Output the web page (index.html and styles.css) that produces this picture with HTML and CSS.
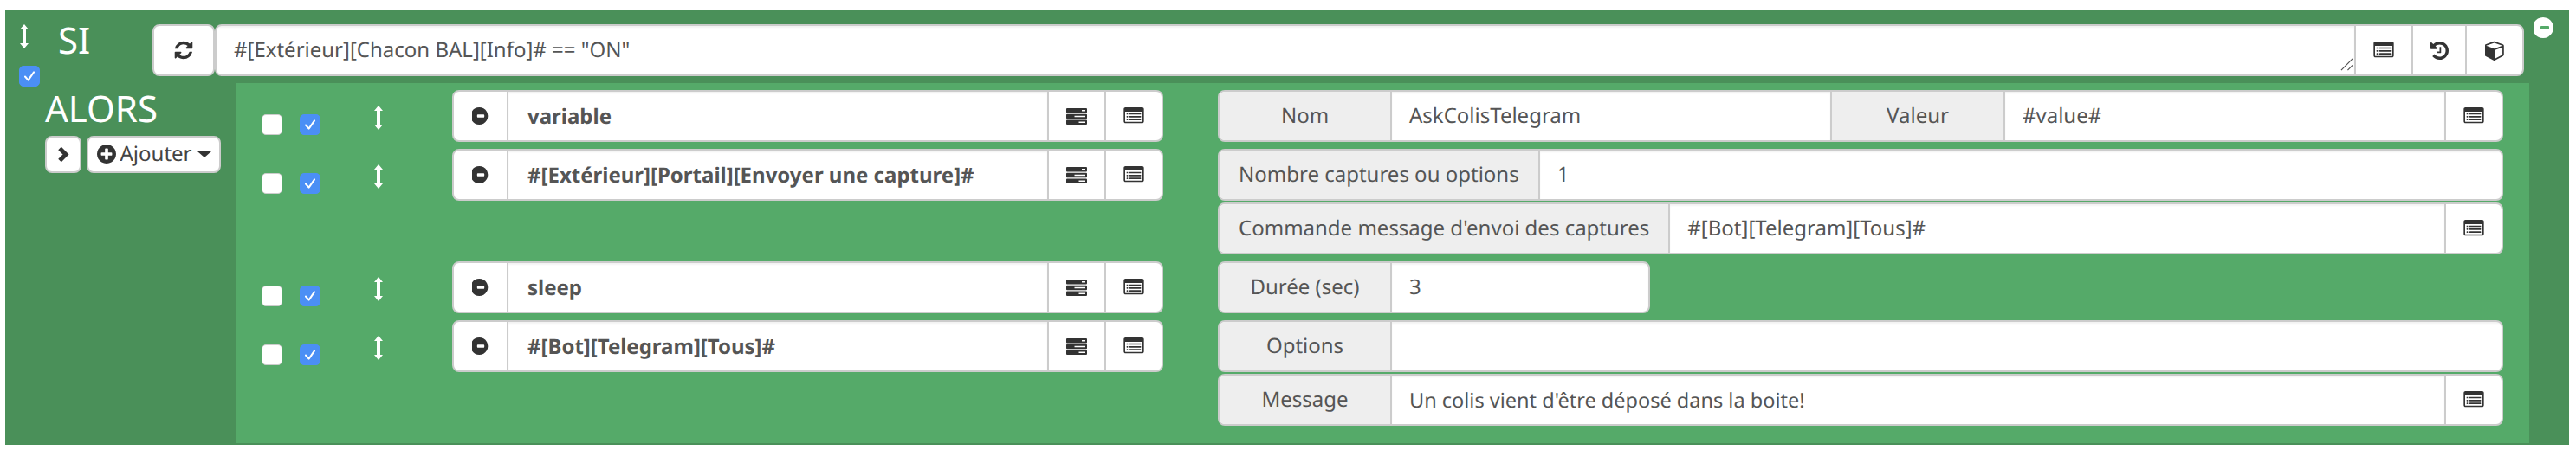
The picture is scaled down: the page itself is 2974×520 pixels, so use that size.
FILE: index.html
```html
<!DOCTYPE html>
<html lang="fr">
<head>
    <meta charset="UTF-8">
    <title>Scénario</title>
    <link rel="stylesheet" href="styles.css">
</head>
<body>

<svg class="sprites" xmlns="http://www.w3.org/2000/svg">
    <symbol id="i-refresh" viewBox="0 0 1792 1792"><path d="M1639 1056q0 5-1 7-64 268-268 434.5t-478 166.5q-146 0-282.5-55t-243.5-157l-129 129q-19 19-45 19t-45-19-19-45v-448q0-26 19-45t45-19h448q26 0 45 19t19 45-19 45l-137 137q71 66 161 102t187 36q134 0 250-65t186-179q11-17 53-117 8-23 30-23h192q13 0 22.5 9.5t9.5 22.5zm25-800v448q0 26-19 45t-45 19h-448q-26 0-45-19t-19-45 19-45l138-138q-148-137-349-137-134 0-250 65t-186 179q-11 17-53 117-8 23-30 23h-199q-13 0-22.5-9.5t-9.5-22.5v-7q65-268 270-434.5t480-166.5q146 0 284 55.5t245 156.5l130-129q19-19 45-19t45 19 19 45z"/></symbol>
    <symbol id="i-minus" viewBox="128 128 1536 1536"><path d="M1216 960v-128q0-26-19-45t-45-19h-512q-26 0-45 19t-19 45v128q0 26 19 45t45 19h512q26 0 45-19t19-45zm320-64q0 209-103 385.5t-279.5 279.5-385.5 103-385.5-103-279.5-279.5-103-385.5 103-385.5 279.5-279.5 385.5-103 385.5 103 279.5 279.5 103 385.5z"/></symbol>
    <symbol id="i-plus" viewBox="128 128 1536 1536"><path d="M1344 960v-128q0-26-19-45t-45-19h-256v-256q0-26-19-45t-45-19h-128q-26 0-45 19t-19 45v256h-256q-26 0-45 19t-19 45v128q0 26 19 45t45 19h256v256q0 26 19 45t45 19h128q26 0 45-19t19-45v-256h256q26 0 45-19t19-45zm320-64q0 209-103 385.5t-279.5 279.5-385.5 103-385.5-103-279.5-279.5-103-385.5 103-385.5 279.5-279.5 385.5-103 385.5 103 279.5 279.5 103 385.5z"/></symbol>
    <symbol id="i-list" viewBox="0 128 1792 1536"><path d="M384 1184v64q0 13-9.5 22.5t-22.5 9.5h-64q-13 0-22.5-9.5t-9.5-22.5v-64q0-13 9.5-22.5t22.5-9.5h64q13 0 22.5 9.5t9.5 22.5zm0-256v64q0 13-9.5 22.5t-22.5 9.5h-64q-13 0-22.5-9.5t-9.5-22.5v-64q0-13 9.5-22.5t22.5-9.5h64q13 0 22.5 9.5t9.5 22.5zm0-256v64q0 13-9.5 22.5t-22.5 9.5h-64q-13 0-22.5-9.5t-9.5-22.5v-64q0-13 9.5-22.5t22.5-9.5h64q13 0 22.5 9.5t9.5 22.5zm1152 512v64q0 13-9.5 22.5t-22.5 9.5h-960q-13 0-22.5-9.5t-9.5-22.5v-64q0-13 9.5-22.5t22.5-9.5h960q13 0 22.5 9.5t9.5 22.5zm0-256v64q0 13-9.5 22.5t-22.5 9.5h-960q-13 0-22.5-9.5t-9.5-22.5v-64q0-13 9.5-22.5t22.5-9.5h960q13 0 22.5 9.5t9.5 22.5zm0-256v64q0 13-9.5 22.5t-22.5 9.5h-960q-13 0-22.5-9.5t-9.5-22.5v-64q0-13 9.5-22.5t22.5-9.5h960q13 0 22.5 9.5t9.5 22.5zm128 704v-832q0-13-9.5-22.5t-22.5-9.5h-1472q-13 0-22.5 9.5t-9.5 22.5v832q0 13 9.5 22.5t22.5 9.5h1472q13 0 22.5-9.5t9.5-22.5zm128-1088v1088q0 66-47 113t-113 47h-1472q-66 0-113-47t-47-113v-1088q0-66 47-113t113-47h1472q66 0 113 47t47 113z"/></symbol>
    <symbol id="i-history" viewBox="128 128 1536 1536"><path d="M1664 896q0 156-61 298t-164 245-245 164-298 61q-172 0-327-72.5t-264-204.5q-7-10-6.5-22.5t8.5-20.5l137-138q10-9 25-9 16 2 23 12 73 95 179 147t225 52q104 0 198.5-40.5t163.5-109.5 109.5-163.5 40.5-198.5-40.5-198.5-109.5-163.5-163.5-109.5-198.5-40.5q-98 0-188 35.5t-160 101.5l137 138q31 30 14 69-17 40-59 40h-448q-26 0-45-19t-19-45v-448q0-42 40-59 39-17 69 14l130 129q107-101 244.5-156.5t284.5-55.5q156 0 298 61t245 164 164 245 61 298zm-640-288v448q0 14-9 23t-23 9h-320q-14 0-23-9t-9-23v-64q0-14 9-23t23-9h224v-352q0-14 9-23t23-9h64q14 0 23 9t9 23z"/></symbol>
    <symbol id="i-cube" viewBox="128 0 1536 1792"><path d="M896 1629l640-349v-636l-640 233v752zm-64-865l698-254-698-254-698 254zm832-252v768q0 35-18 65t-49 47l-704 384q-28 16-61 16t-61-16l-704-384q-31-17-49-47t-18-65v-768q0-40 23-73t61-47l704-256q22-8 44-8t44 8l704 256q38 14 61 47t23 73z"/></symbol>
    <symbol id="i-server" viewBox="0 0 24 19">
        <path d="M1 0h22a1 1 0 0 1 1 1v3.500a1 1 0 0 1-1 1H1a1 1 0 0 1-1-1V1a1 1 0 0 1 1-1zm17 2v1.500h4V2zM1 6.750h22a1 1 0 0 1 1 1v3.500a1 1 0 0 1-1 1H1a1 1 0 0 1-1-1v-3.500a1 1 0 0 1 1-1zm8.500 2v1.500H22v-1.500zM1 13.500h22a1 1 0 0 1 1 1V18a1 1 0 0 1-1 1H1a1 1 0 0 1-1-1v-3.500a1 1 0 0 1 1-1zm13.500 2V17H22v-1.500z" fill-rule="evenodd"/>
    </symbol>
    <symbol id="i-arrows" viewBox="0 0 10 28"><path d="M5 0l5 6H7v16h3l-5 6-5-6h3V6H0z"/></symbol>
    <symbol id="i-tick" viewBox="0 0 24 24"><path d="M6.500 12.500l4 4.500 7-10" fill="none" stroke="#fff" stroke-width="2.200" stroke-linecap="round" stroke-linejoin="round"/></symbol>
    <symbol id="i-chevron" viewBox="0 0 15 19"><path d="M3 2.500l7 7-7 7" fill="none" stroke="currentColor" stroke-width="5"/></symbol>
</svg>

<div class="bloc">
    <div class="bloc-head">
        <div class="grip">
            <svg class="ico-arrows"><use href="#i-arrows"/></svg>
            <span class="check checked"><svg><use href="#i-tick"/></svg></span>
        </div>
        <div class="bloc-title si">SI</div>
        <div class="btn btn-sync"><svg class="ico-sync"><use href="#i-refresh"/></svg></div>
        <div class="group group-cond">
            <div class="field cond"><span>#[Extérieur][Chacon BAL][Info]# == "ON"</span><svg class="resize" viewBox="0 0 16 16"><path d="M1 15L15 1M9 15l6-6" fill="none" stroke="#555" stroke-width="1.300"/></svg></div>
            <div class="addon"><svg class="ico-list"><use href="#i-list"/></svg></div>
            <div class="addon addon-h"><svg class="ico-history"><use href="#i-history"/></svg></div>
            <div class="addon"><svg class="ico-cube"><use href="#i-cube"/></svg></div>
        </div>
        <svg class="bloc-remove"><use href="#i-minus"/></svg>
    </div>

    <div class="bloc-body">
        <div class="alors">
            <div class="bloc-title">ALORS</div>
            <div class="alors-btns">
                <div class="btn btn-small"><svg class="ico-chevron"><use href="#i-chevron"/></svg></div>
                <div class="btn btn-small btn-add"><svg class="ico-plus"><use href="#i-plus"/></svg>Ajouter<span class="caret"></span></div>
            </div>
        </div>

        <div class="actions">
            <div class="action">
                <div class="action-left">
                    <span class="check"></span>
                    <span class="check checked"><svg><use href="#i-tick"/></svg></span>
                    <svg class="ico-arrows"><use href="#i-arrows"/></svg>
                    <div class="group group-cmd">
                        <div class="addon addon-minus"><svg class="ico-minus"><use href="#i-minus"/></svg></div>
                        <div class="field cmd">variable</div>
                        <div class="addon"><svg class="ico-server"><use href="#i-server"/></svg></div>
                        <div class="addon"><svg class="ico-list"><use href="#i-list"/></svg></div>
                    </div>
                </div>
                <div class="action-right">
                    <div class="group">
                        <div class="label">Nom</div>
                        <div class="field field-half">AskColisTelegram</div>
                        <div class="label">Valeur</div>
                        <div class="field">#value#</div>
                        <div class="addon"><svg class="ico-list"><use href="#i-list"/></svg></div>
                    </div>
                </div>
            </div>

            <div class="action">
                <div class="action-left">
                    <span class="check"></span>
                    <span class="check checked"><svg><use href="#i-tick"/></svg></span>
                    <svg class="ico-arrows"><use href="#i-arrows"/></svg>
                    <div class="group group-cmd">
                        <div class="addon addon-minus"><svg class="ico-minus"><use href="#i-minus"/></svg></div>
                        <div class="field cmd">#[Extérieur][Portail][Envoyer une capture]#</div>
                        <div class="addon"><svg class="ico-server"><use href="#i-server"/></svg></div>
                        <div class="addon"><svg class="ico-list"><use href="#i-list"/></svg></div>
                    </div>
                </div>
                <div class="action-right">
                    <div class="group">
                        <div class="label">Nombre captures ou options</div>
                        <div class="field">1</div>
                    </div>
                    <div class="group">
                        <div class="label">Commande message d'envoi des captures</div>
                        <div class="field">#[Bot][Telegram][Tous]#</div>
                        <div class="addon"><svg class="ico-list"><use href="#i-list"/></svg></div>
                    </div>
                </div>
            </div>

            <div class="action">
                <div class="action-left">
                    <span class="check"></span>
                    <span class="check checked"><svg><use href="#i-tick"/></svg></span>
                    <svg class="ico-arrows"><use href="#i-arrows"/></svg>
                    <div class="group group-cmd">
                        <div class="addon addon-minus"><svg class="ico-minus"><use href="#i-minus"/></svg></div>
                        <div class="field cmd">sleep</div>
                        <div class="addon"><svg class="ico-server"><use href="#i-server"/></svg></div>
                        <div class="addon"><svg class="ico-list"><use href="#i-list"/></svg></div>
                    </div>
                </div>
                <div class="action-right">
                    <div class="group group-short">
                        <div class="label">Durée (sec)</div>
                        <div class="field">3</div>
                    </div>
                </div>
            </div>

            <div class="action">
                <div class="action-left">
                    <span class="check"></span>
                    <span class="check checked"><svg><use href="#i-tick"/></svg></span>
                    <svg class="ico-arrows"><use href="#i-arrows"/></svg>
                    <div class="group group-cmd">
                        <div class="addon addon-minus"><svg class="ico-minus"><use href="#i-minus"/></svg></div>
                        <div class="field cmd">#[Bot][Telegram][Tous]#</div>
                        <div class="addon"><svg class="ico-server"><use href="#i-server"/></svg></div>
                        <div class="addon"><svg class="ico-list"><use href="#i-list"/></svg></div>
                    </div>
                </div>
                <div class="action-right">
                    <div class="group">
                        <div class="label">Options</div>
                        <div class="field"></div>
                    </div>
                    <div class="group">
                        <div class="label">Message</div>
                        <div class="field field-msg">Un colis vient d'être déposé dans la boite!</div>
                        <div class="addon"><svg class="ico-list"><use href="#i-list"/></svg></div>
                    </div>
                </div>
            </div>
        </div>
    </div>
</div>

</body>
</html>
```

FILE: styles.css
```css
* {
    box-sizing: border-box;
}

body {
    margin: 0;
    padding: 12px 8px 6px 6px;
    height: 520px;
    background-color: #fff;
    font-family: "Noto Sans", sans-serif;
    font-size: 24px;
    color: #555;
    text-rendering: geometricPrecision;
}

svg {
    display: block;
    fill: #333;
    color: #333;
}

.sprites {
    display: none;
}

/* Bloc SI / ALORS */
.bloc {
    height: 502px;
    background-color: #4a9059;
    display: flex;
    flex-direction: column;
}

.bloc-head {
    display: flex;
    height: 84px;
    padding-top: 16px;
}

.grip {
    width: 24px;
    margin-left: 16px;
}

.grip .ico-arrows {
    margin-left: 1px;
    margin-bottom: 20px;
}

.bloc-title {
    font-size: 42px;
    line-height: 42px;
    color: #fff;
}

.si {
    width: 109px;
    margin-left: 21px;
    margin-top: -2px;
}

.bloc-remove {
    width: 24px;
    height: 24px;
    margin: -8px 0 0 12px;
    fill: #fff;
    background: radial-gradient(circle, #55aa69 0 9px, transparent 9px);
}

.bloc-body {
    flex: 1;
    display: flex;
    margin-bottom: 2px;
}

.alors {
    width: 266px;
    padding: 9px 0 0 46px;
}

.alors-btns {
    display: flex;
    gap: 6px;
    margin-top: 10px;
}

.actions {
    width: 2648px;
    padding-top: 8px;
    background-color: #55aa69;
}

.action {
    display: flex;
    padding-bottom: 8px;
}

.action-left {
    width: 1134px;
    padding-left: 30px;
    display: flex;
    align-items: flex-start;
}

.action-left .check {
    margin: 28px 20px 0 0;
}

.action-left .ico-arrows {
    margin: 18px 0 0 42px;
}

.action-right {
    width: 1484px;
    display: flex;
    flex-direction: column;
    gap: 2px;
}

/* Cases a cocher */
.check {
    display: block;
    width: 24px;
    height: 24px;
    background-color: #fff;
    border: 1px solid #ccc;
    border-radius: 5px;
}

.check.checked {
    background-color: #4b8ff5;
    border-color: #4b8ff5;
}

.check svg {
    width: 22px;
    height: 22px;
}

/* Boutons */
.btn {
    display: flex;
    align-items: center;
    justify-content: center;
    background-color: #fff;
    border: 2px solid #ccc;
    border-radius: 8px;
}

.btn-sync {
    width: 72px;
    height: 60px;
}

.btn-small {
    width: 42px;
    height: 43px;
}

.btn-add {
    width: 155px;
    color: #444;
    padding-bottom: 2px;
}

.caret {
    width: 0;
    height: 0;
    margin: 2px 0 0 6px;
    border-top: 7px solid #333;
    border-left: 8px solid transparent;
    border-right: 8px solid transparent;
}

/* Groupes de champs */
.group {
    display: flex;
    height: 60px;
    background-color: #fff;
    border: 2px solid #ccc;
    border-radius: 8px;
    overflow: hidden;
}

.group-cond {
    width: 2666px;
}

.group-cmd {
    width: 821px;
    margin-left: 80px;
}

.group-short {
    width: 499px;
}

.label {
    min-width: 199px;
    padding: 0 22px 2px;
    display: flex;
    align-items: center;
    justify-content: center;
    background-color: #eee;
    border-right: 2px solid #ccc;
    white-space: nowrap;
}

.label + .field + .label {
    border-left: 2px solid #ccc;
    min-width: 202px;
}

.field {
    flex: 1;
    min-width: 0;
    padding: 0 20px 1px;
    display: flex;
    align-items: center;
    white-space: nowrap;
    box-shadow: inset 0 2px 2px rgba(0, 0, 0, 0.05);
}

.field-half {
    flex: none;
    width: 506px;
}

.field-msg {
    font-size: 23.5px;
}

.cond {
    position: relative;
}

.resize {
    position: absolute;
    right: 1px;
    bottom: 4px;
    width: 15px;
    height: 15px;
}

.cmd {
    font-weight: 700;
    padding: 0 20px 0 22px;
}

.addon {
    width: 66px;
    display: flex;
    align-items: center;
    justify-content: center;
    border-left: 2px solid #ccc;
}

.addon-h {
    width: 62px;
}

.addon-minus {
    width: 63px;
    border-left: 0;
    border-right: 2px solid #ccc;
}

/* Icones */
.ico-arrows {
    width: 10px;
    height: 28px;
    fill: #fff;
}

.ico-sync {
    width: 24px;
    height: 24px;
}

.ico-list {
    width: 24px;
    height: 20px;
}

.ico-server {
    width: 24px;
    height: 19px;
}

.ico-history {
    width: 21px;
    height: 21px;
}

.ico-cube {
    width: 23px;
    height: 24px;
}

.ico-minus {
    width: 20px;
    height: 20px;
}

.ico-plus {
    width: 22px;
    height: 22px;
    margin-right: 5px;
}

.ico-chevron {
    width: 15px;
    height: 19px;
}
```
